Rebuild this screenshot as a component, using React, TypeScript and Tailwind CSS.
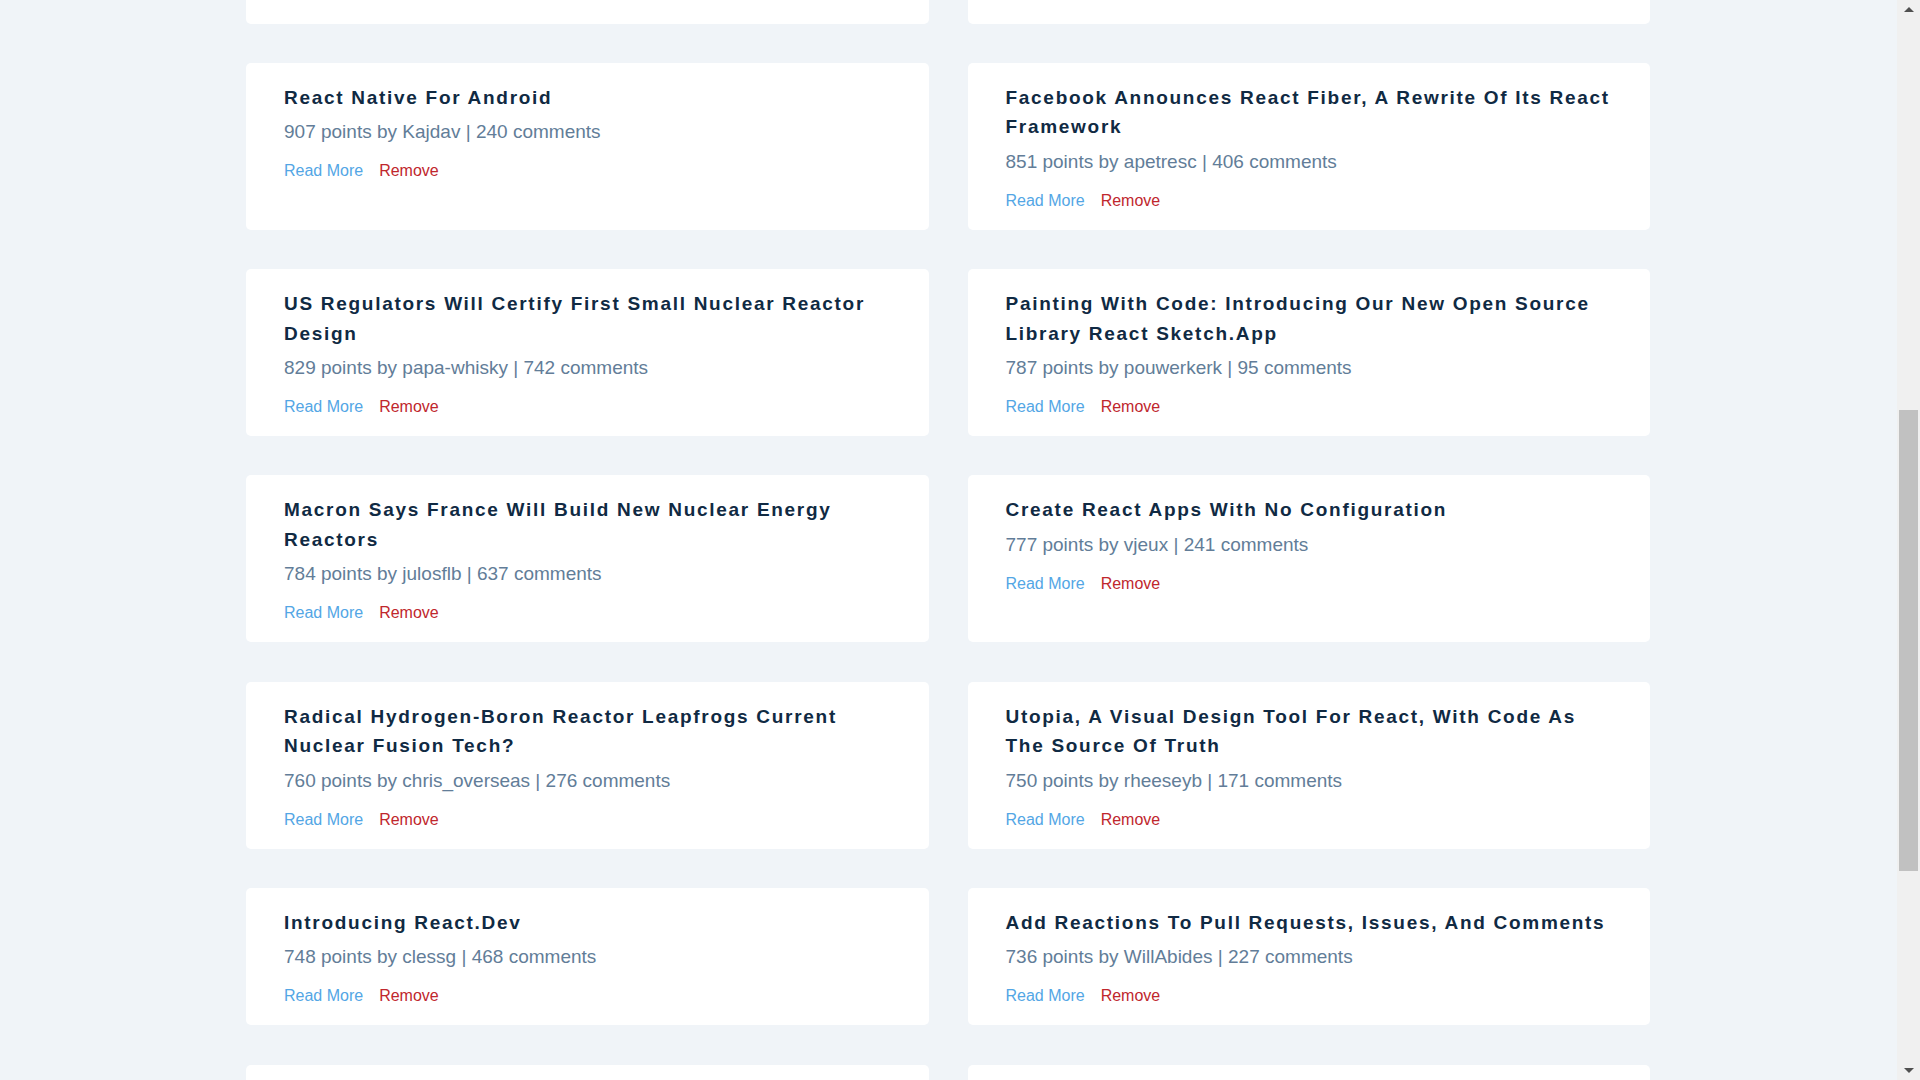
import React, { useLayoutEffect, useRef, useState } from 'react';

type Story = {
  objectID: string;
  title: string;
  author: string;
  points: number;
  num_comments: number;
};

// orden por puntos, 20 resultados como la API
const initialStories: Story[] = [
  { objectID: '1', title: 'Relicensing React, Jest, Flow, And Immutable.Js', author: 'dwwoelfel', points: 2280, num_comments: 498 },
  { objectID: '2', title: 'React Native Is Now Open Source', author: 'peterhunt', points: 1321, num_comments: 311 },
  { objectID: '3', title: 'Facebook Announces React Native At React.Js Conf', author: 'jashkenas', points: 1104, num_comments: 402 },
  { objectID: '4', title: 'Show HN: A Minimal React Renderer For The Terminal', author: 'vadimdemedes', points: 1012, num_comments: 187 },
  { objectID: '5', title: 'Rethinking Best Practices: Why We Built React And What We Learned', author: 'petehunt', points: 956, num_comments: 354 },
  { objectID: '6', title: 'Nuclear Fusion Reactor Achieves Net Energy Gain For The Second Time', author: 'belter', points: 921, num_comments: 512 },
  { objectID: '7', title: 'React Native For Android', author: 'Kajdav', points: 907, num_comments: 240 },
  { objectID: '8', title: 'Facebook Announces React Fiber, A Rewrite Of Its React Framework', author: 'apetresc', points: 851, num_comments: 406 },
  { objectID: '9', title: 'US Regulators Will Certify First Small Nuclear Reactor Design', author: 'papa-whisky', points: 829, num_comments: 742 },
  { objectID: '10', title: 'Painting With Code: Introducing Our New Open Source Library React Sketch.App', author: 'pouwerkerk', points: 787, num_comments: 95 },
  { objectID: '11', title: 'Macron Says France Will Build New Nuclear Energy Reactors', author: 'julosflb', points: 784, num_comments: 637 },
  { objectID: '12', title: 'Create React Apps With No Configuration', author: 'vjeux', points: 777, num_comments: 241 },
  { objectID: '13', title: 'Radical Hydrogen-Boron Reactor Leapfrogs Current Nuclear Fusion Tech?', author: 'chris_overseas', points: 760, num_comments: 276 },
  { objectID: '14', title: 'Utopia, A Visual Design Tool For React, With Code As The Source Of Truth', author: 'rheeseyb', points: 750, num_comments: 171 },
  { objectID: '15', title: 'Introducing React.Dev', author: 'clessg', points: 748, num_comments: 468 },
  { objectID: '16', title: 'Add Reactions To Pull Requests, Issues, And Comments', author: 'WillAbides', points: 736, num_comments: 227 },
  { objectID: '17', title: 'React Server Components', author: 'jeswin', points: 731, num_comments: 384 },
  { objectID: '18', title: 'The Story Of React Native', author: 'ingve', points: 725, num_comments: 139 },
  { objectID: '19', title: 'Preact: Fast 3kb React Alternative With The Same API', author: 'tilt', points: 711, num_comments: 205 },
  { objectID: '20', title: 'React Is Becoming A Black Box', author: 'jimmyhmiller', points: 702, num_comments: 316 },
];

const font = "font-['Liberation_Sans',Arial,sans-serif]";

const Item = ({ item, onRemove, innerRef }: { item: Story; onRemove: (id: string) => void; innerRef?: React.Ref<HTMLDivElement> }) => (
  <div ref={innerRef} className="bg-white rounded-[5px] pl-[38px] pr-8 pt-5 pb-[19px]">
    <h2 className="text-[19px] leading-[29.5px] font-bold tracking-[0.09em] text-[#102a43]">{item.title}</h2>
    <p className="mt-[5px] text-[19px] leading-[29px] text-[#627d98]">
      {item.points} points by {item.author} | {item.num_comments} comments
    </p>
    <div className="mt-[15px] flex items-center gap-4 text-base leading-5">
      <a href="#" className="text-[#53a6e5]">Read More</a>
      <button type="button" onClick={() => onRemove(item.objectID)} className="text-[#c0272d] cursor-pointer">Remove</button>
    </div>
  </div>
);

// barra de scroll estilo Windows (el navegador headless no la pinta)
const Scrollbar = () => (
  <div className="fixed top-0 right-0 h-screen w-[23px] bg-[#f0f0f0] flex flex-col items-center">
    <svg width="10" height="17" viewBox="0 0 10 17" className="shrink-0">
      <path d="M0 12 L5 7 L10 12 Z" fill="#505050" />
    </svg>
    <div className="flex-1 w-full px-[2px]">
      <div className="mt-[393px] h-[461px] bg-[#c1c1c1]" />
    </div>
    <svg width="10" height="17" viewBox="0 0 10 17" className="shrink-0">
      <path d="M0 5 L5 10 L10 5 Z" fill="#505050" />
    </svg>
  </div>
);

export default function App() {
  const [stories, setStories] = useState<Story[]>(initialStories);
  const anchor = useRef<HTMLDivElement>(null);

  // la captura está desplazada: la fila de "React Native For Android" arranca a 63px
  useLayoutEffect(() => {
    if (!anchor.current) return;
    const top = anchor.current.getBoundingClientRect().top + window.scrollY;
    window.scrollTo(0, top - 63);
  }, []);

  const handleRemove = (id: string) => setStories(stories.filter(s => s.objectID !== id));

  return (
    <div className={`min-h-screen bg-[#f0f4f8] ${font}`}>
      <div className="ml-[246px] w-[1404px] pb-[180px]">
        <header className="h-[317px] flex flex-col justify-end pb-6">
          <h1 className="text-[40px] font-bold text-[#102a43]">Hacker Stories</h1>
          <form className="mt-6 flex gap-4" onSubmit={e => e.preventDefault()}>
            <input defaultValue="react" className="w-[420px] h-12 px-4 rounded-[5px] bg-white text-lg text-[#334e68] outline-none" />
            <button type="submit" className="h-12 px-8 rounded-[5px] bg-[#102a43] text-white font-bold">Search</button>
          </form>
        </header>
        <div className="mt-10 grid grid-cols-2 gap-x-[39px] gap-y-[39.25px]">
          {stories.map(s => (
            <Item key={s.objectID} item={s} onRemove={handleRemove} innerRef={s.objectID === '7' ? anchor : undefined} />
          ))}
        </div>
        <div className="mt-16 flex justify-center">
          <button type="button" className="h-12 px-10 rounded-[5px] bg-white text-[#102a43] font-bold">More</button>
        </div>
      </div>
      <Scrollbar />
    </div>
  );
}
